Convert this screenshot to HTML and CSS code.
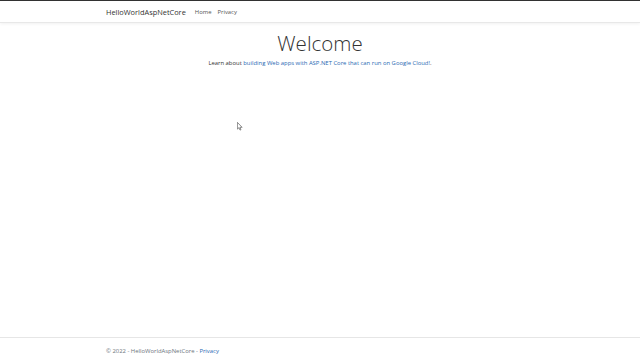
FILE: index.html
```html
<!DOCTYPE html>
<html lang="en">
<head>
<meta charset="utf-8">
<title>Home Page - HelloWorldAspNetCore</title>
<link rel="stylesheet" href="styles.css">
</head>
<body>
<div class="topline"></div>
<header class="navbar">
  <div class="container nav-inner">
    <a class="brand" href="#">HelloWorldAspNetCore</a>
    <nav class="links">
      <a href="#">Home</a>
      <a href="#">Privacy</a>
    </nav>
  </div>
</header>
<main class="main">
  <h1 class="title">Welcome</h1>
  <p class="lead">Learn about <a href="#">building Web apps with ASP.NET Core that can run on Google Cloud!</a>.</p>
</main>
<footer class="footer">
  <div class="container">&copy; 2022 - HelloWorldAspNetCore - <a href="#">Privacy</a></div>
</footer>
<svg class="cursor" width="6" height="9" viewBox="0 0 8 12"><path d="M0.5 0.5 L0.5 9.5 L2.6 7.6 L4 10.8 L5.3 10.2 L3.9 7.1 L6.8 7.1 Z" fill="#fff" stroke="#555" stroke-width="0.9" stroke-linejoin="round"/></svg>
</body>
</html>
```
FILE: styles.css
```css
* { box-sizing: border-box; }
html, body { height: 100%; }
body {
  margin: 0;
  font-family: "Open Sans", "Noto Sans", sans-serif;
  color: #212529;
  background: #fff;
  display: flex;
  flex-direction: column;
  position: relative;
}
a { text-decoration: none; color: #0366d6; }
.topline { height: 1px; background: #333; }
.container { width: 428px; margin: 0 auto; }
.navbar {
  height: 22px;
  border-bottom: 1px solid #e8e8e8;
  box-shadow: 0 1px 3px rgba(0,0,0,0.06);
  display: flex;
  align-items: center;
}
.nav-inner { display: flex; align-items: center; }
.brand { color: #333; font-size: 7.4px; margin-right: 9px; }
.links { display: flex; gap: 6px; }
.links a { color: #555; font-size: 5.9px; }
.main { flex: 1; text-align: center; padding-top: 8px; }
.title { font-weight: 300; font-size: 20.5px; margin: 0; line-height: 24px; color: #333; }
.lead { font-size: 5.9px; line-height: 8px; margin: 4px 0 0; color: #333; }
.lead a { color: #2a6ab3; }
.footer {
  border-top: 1px solid #e6e6e6;
  height: 23px;
  display: flex;
  align-items: center;
  font-size: 5.9px;
  color: #6c757d;
  padding-top: 4px;
}
.footer a { color: #2a6ab3; }
.cursor { position: absolute; left: 237px; top: 122px; }
```
